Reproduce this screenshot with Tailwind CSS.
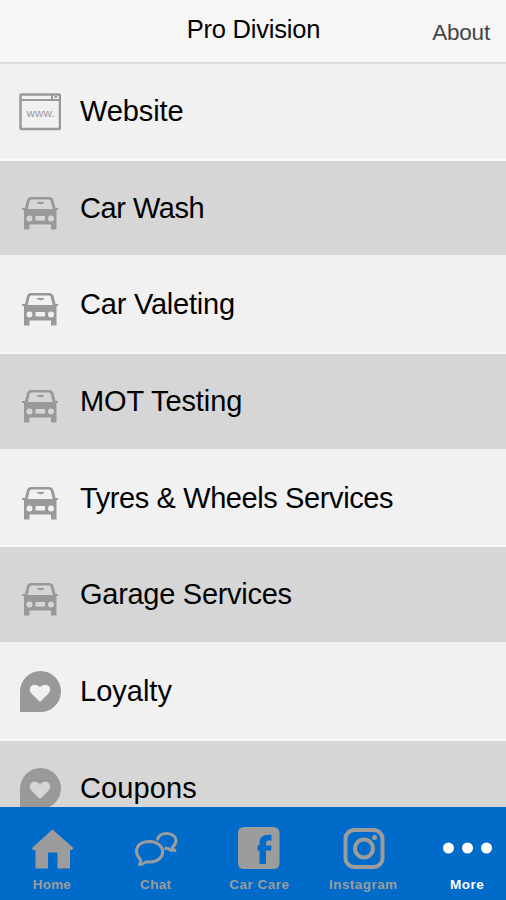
<!DOCTYPE html>
<html lang="en">
<head>
    <meta charset="UTF-8">
    <meta name="viewport" content="width=device-width, initial-scale=1.0">
    <title>Pro Division</title>
    <script src="https://cdn.jsdelivr.net/npm/@tailwindcss/browser@4"></script>
    <style>
        body {
            font-family: 'Liberation Sans', Arial, sans-serif;
        }
    </style>
</head>
<body class="h-screen flex flex-col overflow-hidden bg-[#f1f1f1] text-black">
    <!-- Shared icons -->
    <svg class="hidden">
        <symbol id="car" viewBox="0 0 42 42">
            <path fill-rule="evenodd" d="M12 8H30Q33.500 8 34.500 11L36.500 19H39V21H37.500V40.500H32V35.500H10.500V40.500H5V21H3V19H6L8 11Q9 8 12 8ZM12.500 10.500Q11 10.500 10.600 12L8.800 20H33.800L31.700 12Q31.300 10.500 30 10.500ZM10.500 26.500A3 3 0 1 0 10.500 32.500A3 3 0 1 0 10.500 26.500ZM32 26.500A3 3 0 1 0 32 32.500A3 3 0 1 0 32 26.500ZM16.500 27V31.500H26V27Z"/>
            <path d="M18 13H25V14.200L22 15.200L18 14.200Z"/>
        </symbol>
        <symbol id="heart" viewBox="0 0 42 42">
            <path fill-rule="evenodd" d="M1 41V20.500A20.500 20.500 0 1 1 21.500 41ZM21 31L12.500 22.500C7.500 17 14.500 10 21 16.200C27.500 10 34.500 17 29.500 22.500Z"/>
        </symbol>
    </svg>

    <header class="h-16 shrink-0 grid grid-cols-3 bg-[#f6f6f6] border-b-2 border-[#dcdcdc]">
        <h1 class="col-start-2 pt-[13px] pl-px text-center text-[25.500px] leading-8 tracking-[-0.200px] whitespace-nowrap">Pro Division</h1>
        <a href="#" class="pt-[17px] pr-4 text-right text-[22.500px] leading-8 tracking-[-0.200px] text-[#444]">About</a>
    </header>

    <main class="flex-1 min-h-0 overflow-hidden text-[29px] leading-9">
        <a href="#" class="flex h-[96.700px] px-[19px] gap-[19px] border-b-2 border-[#f8f8f8] bg-[#f1f1f1]">
            <svg class="mt-[27px] size-[42px] shrink-0 text-[#999]" viewBox="0 0 42 42" fill="none" stroke="currentColor" stroke-width="2.500">
                <rect x="1.500" y="3.500" width="39.500" height="34.500" rx="1"/>
                <path d="M1 9H41M33 4V9" stroke-width="2"/>
                <path d="M35.500 5H38V7H35.500Z" fill="currentColor" stroke="none"/>
                <text x="7.500" y="25.500" font-size="10" fill="currentColor" stroke="none" textLength="28" lengthAdjust="spacingAndGlyphs">www.</text>
            </svg>
            <span class="pt-[29px] tracking-[-0.100px]">Website</span>
        </a>
        <a href="#" class="flex h-[96.700px] px-[19px] gap-[19px] border-b-2 border-[#f1f1f1] bg-[#d6d6d6]">
            <svg class="mt-7 size-[42px] shrink-0 fill-[#999]"><use href="#car"/></svg>
            <span class="pt-[29px] tracking-[-0.450px]">Car Wash</span>
        </a>
        <a href="#" class="flex h-[96.700px] px-[19px] gap-[19px] border-b-2 border-[#f8f8f8] bg-[#f1f1f1]">
            <svg class="mt-7 size-[42px] shrink-0 fill-[#999]"><use href="#car"/></svg>
            <span class="pt-[29px] tracking-[-0.220px]">Car Valeting</span>
        </a>
        <a href="#" class="flex h-[96.700px] px-[19px] gap-[19px] border-b-2 border-[#f1f1f1] bg-[#d6d6d6]">
            <svg class="mt-7 size-[42px] shrink-0 fill-[#999]"><use href="#car"/></svg>
            <span class="pt-[29px] tracking-[-0.100px]">MOT Testing</span>
        </a>
        <a href="#" class="flex h-[96.700px] px-[19px] gap-[19px] border-b-2 border-[#f8f8f8] bg-[#f1f1f1]">
            <svg class="mt-7 size-[42px] shrink-0 fill-[#999]"><use href="#car"/></svg>
            <span class="pt-[29px] tracking-[-0.400px]">Tyres &amp; Wheels Services</span>
        </a>
        <a href="#" class="flex h-[96.700px] px-[19px] gap-[19px] border-b-2 border-[#f1f1f1] bg-[#d6d6d6]">
            <svg class="mt-7 size-[42px] shrink-0 fill-[#999]"><use href="#car"/></svg>
            <span class="pt-[29px] tracking-[-0.280px]">Garage Services</span>
        </a>
        <a href="#" class="flex h-[96.700px] px-[19px] gap-[19px] border-b-2 border-[#f8f8f8] bg-[#f1f1f1]">
            <svg class="mt-[27px] size-[42px] shrink-0 fill-[#999]"><use href="#heart"/></svg>
            <span class="pt-[29px]">Loyalty</span>
        </a>
        <a href="#" class="flex h-[96.700px] px-[19px] gap-[19px] bg-[#d6d6d6]">
            <svg class="mt-[27px] size-[42px] shrink-0 fill-[#999]"><use href="#heart"/></svg>
            <span class="pt-[29px] tracking-[0.100px]">Coupons</span>
        </a>
    </main>

    <nav class="h-[93px] shrink-0 flex overflow-hidden bg-[#006bc9] text-[13.500px] leading-4 font-bold text-[#9c9c9c]">
        <a href="#" class="w-[103.800px] shrink-0 flex flex-col items-center pt-[19px] gap-[7px]">
            <svg class="size-11" viewBox="0 0 44 44" fill="currentColor">
                <path d="M22.500 3.500L43.500 22L42 24H40V42.500H27.500V26.500H18V42.500H5.500V24H3L2 22Z"/>
            </svg>
            <span class="tracking-[0.200px]">Home</span>
        </a>
        <a href="#" class="w-[103.800px] shrink-0 flex flex-col items-center pt-[19px] gap-[7px]">
            <svg class="size-11" viewBox="0 0 44 44" fill="none" stroke="currentColor" stroke-width="3" stroke-linejoin="round">
                <path d="M6 33C-1 25 3 15.500 15.500 15.500C33 16 33 35.500 16 36C13 36 12 35.500 11 36.500Q9 38.500 5.500 38.500Q7.500 36 6 33Z"/>
                <path d="M23.500 14.500C24 5 41 5 42 14.500Q42 18.500 38.500 21Q38.500 23.500 41 24.500Q37 25 34 22.500Q32 22.500 30.500 22"/>
            </svg>
            <span class="tracking-[0.300px]">Chat</span>
        </a>
        <a href="#" class="w-[103.800px] shrink-0 flex flex-col items-center pt-[19px] gap-[7px]">
            <svg class="size-11" viewBox="0 0 44 44" fill="currentColor">
                <path fill-rule="evenodd" d="M7 1H36Q42.500 1 42.500 7V37Q42.500 43 36 43H7Q1 43 1 37V7Q1 1 7 1ZM34.500 9C26 8 22.500 11.500 22.500 17V19.500H20.500V24.500H22.500V38H29V24.500H34L34.500 19.500H29V17Q29 14.500 31.500 14.500H34.500Z"/>
            </svg>
            <span class="tracking-[0.500px]">Car Care</span>
        </a>
        <a href="#" class="w-[103.800px] shrink-0 flex flex-col items-center pt-[19px] gap-[7px]">
            <svg class="size-11" viewBox="0 0 44 44" fill="none" stroke="currentColor" stroke-width="4">
                <rect x="4.500" y="4" width="37" height="37" rx="9"/>
                <circle cx="23" cy="22.500" r="9"/>
                <circle cx="33.500" cy="11.500" r="2.500" fill="currentColor" stroke="none"/>
            </svg>
            <span class="tracking-[0.450px]">Instagram</span>
        </a>
        <a href="#" class="w-[103.800px] shrink-0 flex flex-col items-center pt-[19px] gap-[7px] text-white">
            <svg class="h-11 w-[50px]" viewBox="0 0 50 44" fill="currentColor">
                <circle cx="6.500" cy="22" r="5.500"/>
                <circle cx="25.500" cy="22" r="5.500"/>
                <circle cx="44.500" cy="22" r="5.500"/>
            </svg>
            <span class="tracking-[0.500px]">More</span>
        </a>
    </nav>
</body>
</html>
